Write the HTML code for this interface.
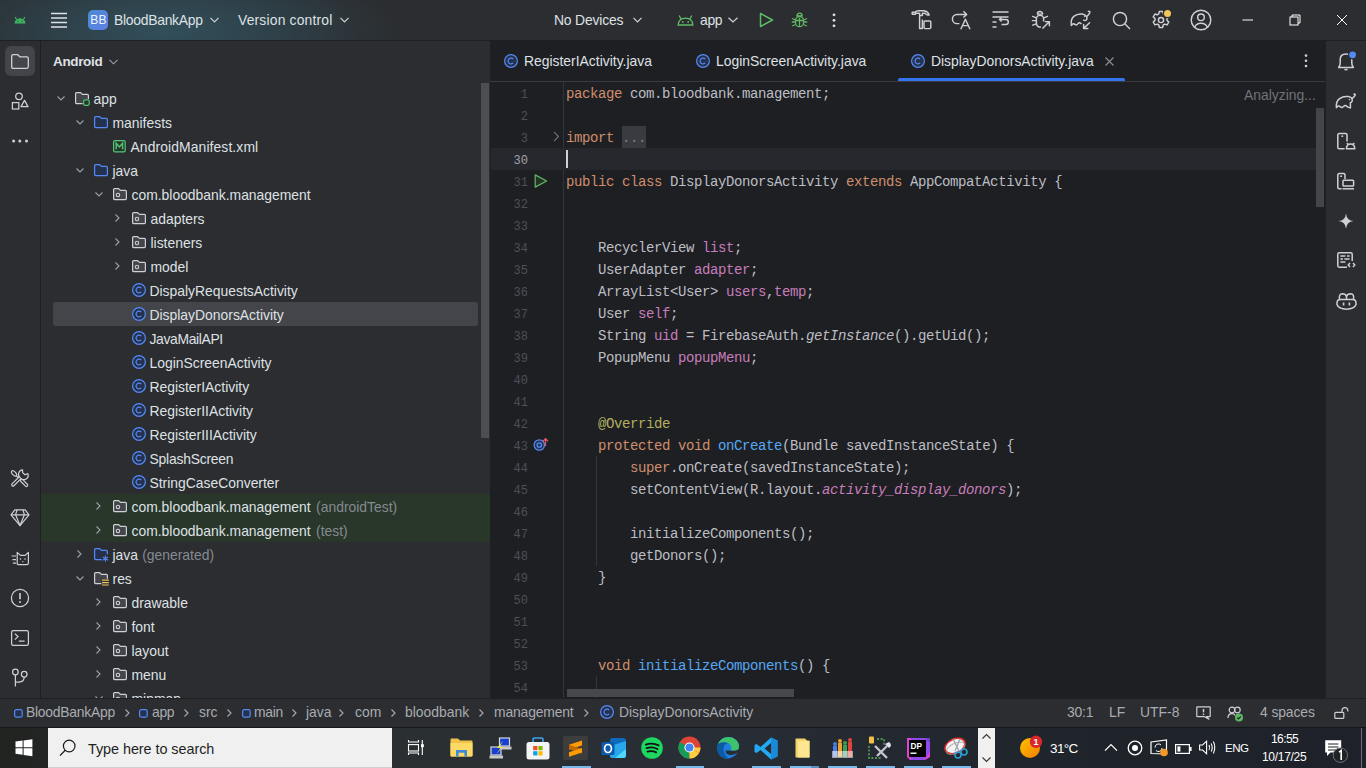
<!DOCTYPE html>
<html><head><meta charset="utf-8"><style>
*{margin:0;padding:0;box-sizing:border-box}
html,body{width:1366px;height:768px;overflow:hidden}
body{position:relative;background:#2b2d30;font-family:"Liberation Sans",sans-serif;color:#dfe1e5;font-size:13.9px}
.a{position:absolute}
.t{position:absolute;white-space:pre;line-height:16px}
svg{position:absolute;overflow:visible}
#title{left:0;top:0;width:1366px;height:40px;background:radial-gradient(ellipse 235px 80px at 165px 32px,#314f5a 0%,#2f434c 40%,#2c363b 75%,#2b2d30 100%)}
#tline{left:0;top:40px;width:1366px;height:1px;background:#1e1f22}
#lstrip{left:0;top:41px;width:40px;height:657px;background:#2b2d30}
#lsb{left:40px;top:41px;width:1px;height:657px;background:#1e1f22}
#proj{left:41px;top:41px;width:449px;height:657px;background:#2b2d30;overflow:hidden}
#editor{left:490px;top:41px;width:835px;height:657px;background:#1e1f22;overflow:hidden}
#rsb{left:1325px;top:41px;width:1px;height:657px;background:#1e1f22}
#rstrip{left:1326px;top:41px;width:40px;height:657px;background:#2b2d30}
#sline{left:0;top:698px;width:1366px;height:1px;background:#1e1f22}
#status{left:0;top:699px;width:1366px;height:28px;background:#2b2d30}
#taskbar{left:0;top:727px;width:1366px;height:41px;background:#1c1e1c}
</style></head><body>
<div class="a" id="title"></div>
<div class="a" id="tline"></div>
<div class="a" id="lstrip"></div>
<div class="a" id="lsb"></div>
<div class="a" id="proj"></div>
<div class="a" id="editor"></div>
<div class="a" id="rsb"></div>
<div class="a" id="rstrip"></div>
<div class="a" id="sline"></div>
<div class="a" id="status"></div>
<div class="a" id="taskbar"></div>
<!-- TITLE BAR -->
<svg style="left:14px;top:16px" width="12" height="8" viewBox="0 0 12 8"><path d="M0.5 7.5 Q1 2.5 6 2.2 Q11 2.5 11.5 7.5 Z" fill="#3fb35f"/><path d="M2.5 3.5 L1.2 1 M9.5 3.5 L10.8 1" stroke="#3fb35f" stroke-width="1.1"/><circle cx="4" cy="5.2" r="0.6" fill="#2b3a3a"/><circle cx="8" cy="5.2" r="0.6" fill="#2b3a3a"/></svg>
<svg style="left:51px;top:12px" width="16" height="16" viewBox="0 0 16 16"><path d="M0 1.5H16M0 6H16M0 10.5H16M0 15H16" stroke="#dfe1e5" stroke-width="1.4"/></svg>
<div class="a" style="left:88px;top:10px;width:20px;height:20px;border-radius:5px;background:linear-gradient(135deg,#4b8ad3,#5e80e6)"></div>
<div class="t" style="left:89px;top:12px;width:19px;text-align:center;font-size:12px;color:#f2f4f8;letter-spacing:0.3px">BB</div>
<div class="t" style="left:114px;top:12px;letter-spacing:-0.27px">BloodBankApp</div>
<svg style="left:210px;top:17px" width="9" height="6" viewBox="0 0 9 6"><path d="M0.5 0.8L4.5 4.8L8.5 0.8" stroke="#cfd1d6" stroke-width="1.2" fill="none"/></svg>
<div class="t" style="left:238px;top:12px;letter-spacing:0.17px">Version control</div>
<svg style="left:340px;top:17px" width="9" height="6" viewBox="0 0 9 6"><path d="M0.5 0.8L4.5 4.8L8.5 0.8" stroke="#cfd1d6" stroke-width="1.2" fill="none"/></svg>
<div class="t" style="left:554px;top:12px;letter-spacing:-0.18px">No Devices</div>
<svg style="left:633px;top:17px" width="9" height="6" viewBox="0 0 9 6"><path d="M0.5 0.8L4.5 4.8L8.5 0.8" stroke="#cfd1d6" stroke-width="1.2" fill="none"/></svg>
<svg style="left:677px;top:14px" width="17" height="12" viewBox="0 0 17 12"><path d="M1.2 11 Q1.5 4.5 8.5 4.2 Q15.5 4.5 15.8 11 Z" fill="none" stroke="#5fb865" stroke-width="1.3"/><path d="M4 5 L2.2 1.5 M13 5 L14.8 1.5" stroke="#5fb865" stroke-width="1.3"/><circle cx="5.8" cy="8" r="0.9" fill="#5fb865"/><circle cx="11.2" cy="8" r="0.9" fill="#5fb865"/></svg>
<div class="t" style="left:700px;top:12px;letter-spacing:-0.3px">app</div>
<svg style="left:728px;top:17px" width="10" height="6" viewBox="0 0 10 6"><path d="M0.5 0.8L5 5L9.5 0.8" stroke="#cfd1d6" stroke-width="1.2" fill="none"/></svg>
<svg style="left:759px;top:12px" width="15" height="16" viewBox="0 0 15 16"><path d="M1.5 1.5 L13.5 8 L1.5 14.5 Z" fill="none" stroke="#5fb865" stroke-width="1.5" stroke-linejoin="round"/></svg>
<svg style="left:791px;top:12px" width="17" height="16" viewBox="0 0 17 16"><path d="M8.5 1.2 a2.6 2.6 0 0 1 2.6 2.6 h-5.2 a2.6 2.6 0 0 1 2.6 -2.6z" fill="none" stroke="#5fb865" stroke-width="1.3"/><rect x="4.5" y="4.5" width="8" height="10.2" rx="4" fill="none" stroke="#5fb865" stroke-width="1.3"/><path d="M8.5 6v8.5M1 6.5l3.5 1.5M16 6.5l-3.5 1.5M0.8 10h3.7M16.2 10h-3.7M1.2 14l3.3-1.5M15.8 14l-3.3-1.5M4.5 8.5h8" stroke="#5fb865" stroke-width="1.3" fill="none"/></svg>
<svg style="left:832px;top:13px" width="4" height="15" viewBox="0 0 4 15"><circle cx="2" cy="1.8" r="1.4" fill="#dfe1e5"/><circle cx="2" cy="7.3" r="1.4" fill="#dfe1e5"/><circle cx="2" cy="12.8" r="1.4" fill="#dfe1e5"/></svg>
<!-- right toolbar icons -->
<svg style="left:911px;top:10px" width="21" height="20" viewBox="0 0 21 20"><g fill="none" stroke="#ced0d6" stroke-width="1.45" stroke-linejoin="round"><path d="M1.2 2.2 H4 Q5 0.8 8 0.8 H13 Q17 1.5 18.2 5 H16.2 L13.6 3.2 H11.4 V5.5 H8.6 V3.2 H4.5 V4.2 H1.2 Z"/><path d="M8.6 5.5 V18.4 H11.4 V9.6"/><rect x="13" y="11" width="6.8" height="7.6" rx="1"/></g></svg>
<svg style="left:952px;top:10px" width="19" height="20" viewBox="0 0 19 20"><g fill="none" stroke="#ced0d6" stroke-width="1.45" stroke-linejoin="round"><path d="M7.6 4.4 H5 A4.6 4.6 0 0 0 5 13.6 H7.4"/><path d="M7.4 4.4 H14.6 M11.4 1.2 L14.7 4.4 L11.4 7.6"/><path d="M8.8 19.2 L13.4 9.2 L18 19.2 M10.4 15.6 H16.4"/></g></svg>
<svg style="left:992px;top:11px" width="18" height="18" viewBox="0 0 18 18"><g fill="none" stroke="#ced0d6" stroke-width="1.45"><path d="M0.5 1H16.5M0.5 6H16.5M0.5 11H4.5M0.5 16H4.5"/><path d="M9.5 13.5 H13.8 A2.5 2.5 0 0 0 13.8 8.5 H7.5 M9.6 6.4 L7.5 8.5 L9.6 10.6"/></g></svg>
<svg style="left:1031px;top:10px" width="20" height="20" viewBox="0 0 20 20"><g fill="none" stroke="#ced0d6" stroke-width="1.45" stroke-linejoin="round"><path d="M9 1.5 a2.6 2.6 0 0 1 2.6 2.6 h-5.2 a2.6 2.6 0 0 1 2.6 -2.6z"/><path d="M12.6 11.5 V8.8 a3.6 3.6 0 0 0 -7.2 0 V13.5 a3.6 3.6 0 0 0 4.6 3.4"/><path d="M1.2 6.2 L5.2 7.8 M0.8 10.6 H5.2 M1.2 15.4 L5.2 13.8 M17 6.2 L13 7.8"/><path d="M11.5 18.5 L18.2 11.8 M13.8 11.6 H18.4 V16.2"/></g></svg>
<svg style="left:1070px;top:10px" width="22" height="20" viewBox="0 0 22 20"><g fill="none" stroke="#ced0d6" stroke-width="1.45" stroke-linejoin="round" stroke-linecap="round"><path d="M1.4 15.4 Q0.4 9.4 3.8 6.4 Q7.4 3.4 12 4 Q15.2 4.4 16.6 6.6 Q19 4.8 19.8 2.8 Q20.2 0.8 18.4 1.4"/><path d="M16.6 6.6 Q17.4 8.8 16.4 10 Q15 11 13.6 10.2"/><path d="M1.4 15.4 Q3.2 12.6 5 14.4 Q6.6 15.8 8 13.6 Q9.2 12 11 13.6"/><path d="M19.6 12.8 L13.6 18.4 M13.6 14.4 V18.4 H17.8"/></g><circle cx="14.6" cy="6.6" r="0.7" fill="#ced0d6"/></svg>
<svg style="left:1112px;top:11px" width="19" height="19" viewBox="0 0 19 19"><circle cx="8" cy="8" r="6.6" fill="none" stroke="#ced0d6" stroke-width="1.45"/><path d="M12.8 12.8 L18 18" stroke="#ced0d6" stroke-width="1.4"/></svg>
<svg style="left:1151px;top:10px" width="20" height="20" viewBox="0 0 20 20"><path d="M8.3 1.5 h3.4 l0.5 2.4 l1.6 0.9 l2.3 -0.8 l1.7 2.9 l-1.8 1.6 v1.9 l1.8 1.6 l-1.7 2.9 l-2.3 -0.8 l-1.6 0.9 l-0.5 2.4 h-3.4 l-0.5 -2.4 l-1.6 -0.9 l-2.3 0.8 l-1.7 -2.9 l1.8 -1.6 v-1.9 l-1.8 -1.6 l1.7 -2.9 l2.3 0.8 l1.6 -0.9 z" fill="none" stroke="#ced0d6" stroke-width="1.45" stroke-linejoin="round"/><circle cx="10" cy="10" r="2.6" fill="none" stroke="#ced0d6" stroke-width="1.45"/><circle cx="16.5" cy="3.4" r="4.8" fill="#2b2d30"/><circle cx="16.5" cy="3.4" r="3.5" fill="#f2c55c"/></svg>
<svg style="left:1190px;top:9px" width="22" height="22" viewBox="0 0 22 22"><circle cx="11" cy="11" r="9.8" fill="none" stroke="#ced0d6" stroke-width="1.45"/><circle cx="11" cy="8.3" r="3.3" fill="none" stroke="#ced0d6" stroke-width="1.45"/><path d="M4.6 18.4 Q6 14.2 11 14.2 Q16 14.2 17.4 18.4" fill="none" stroke="#ced0d6" stroke-width="1.45"/></svg>
<svg style="left:1242px;top:19px" width="12" height="2" viewBox="0 0 12 2"><path d="M0.5 1H11" stroke="#ffffff" stroke-width="1"/></svg>
<svg style="left:1289px;top:14px" width="12" height="12" viewBox="0 0 12 12"><rect x="1" y="3" width="8" height="8" fill="none" stroke="#fff" stroke-width="1"/><path d="M3 3V1H11V9H9" fill="none" stroke="#fff" stroke-width="1"/></svg>
<svg style="left:1336px;top:14px" width="12" height="12" viewBox="0 0 12 12"><path d="M1 1L11 11M11 1L1 11" stroke="#fff" stroke-width="1"/></svg>

<!-- LEFT STRIP -->
<div class="a" style="left:5px;top:46px;width:30px;height:30px;border-radius:6px;background:#43454a"></div>
<svg style="left:11px;top:54px" width="18" height="15" viewBox="0 0 18 15"><path d="M0.7 2.2 Q0.7 0.7 2.2 0.7 H6.8 L8.8 2.8 H15.8 Q17.3 2.8 17.3 4.3 V12.8 Q17.3 14.3 15.8 14.3 H2.2 Q0.7 14.3 0.7 12.8 Z" fill="none" stroke="#ced0d6" stroke-width="1.3" stroke-linejoin="round"/></svg>
<svg style="left:11px;top:92px" width="18" height="18" viewBox="0 0 18 18"><circle cx="8" cy="4.3" r="3.3" fill="none" stroke="#ced0d6" stroke-width="1.25"/><rect x="1.4" y="10.6" width="6.4" height="6.4" fill="none" stroke="#ced0d6" stroke-width="1.25"/><path d="M13.5 8.4 L17 14.6 H10 Z" fill="none" stroke="#ced0d6" stroke-width="1.25" stroke-linejoin="round"/></svg>
<svg style="left:11px;top:139px" width="18" height="4" viewBox="0 0 18 4"><circle cx="2.6" cy="2" r="1.5" fill="#ced0d6"/><circle cx="8.8" cy="2" r="1.5" fill="#ced0d6"/><circle cx="15.5" cy="2" r="1.5" fill="#ced0d6"/></svg>
<svg style="left:11px;top:469px" width="18" height="18" viewBox="0 0 18 18"><g stroke-linecap="round" fill="#2b2d30"><path d="M5.2 6.6 L9.6 11" stroke="#ced0d6" stroke-width="1.2"/><line x1="10.8" y1="11.6" x2="15.4" y2="16.2" stroke="#ced0d6" stroke-width="3.8"/><line x1="10.8" y1="11.6" x2="15.4" y2="16.2" stroke="#2b2d30" stroke-width="1.4"/><ellipse cx="3" cy="4.4" rx="3.3" ry="1.7" transform="rotate(45 3 4.4)" stroke="#ced0d6" stroke-width="1.2"/><line x1="2" y1="15.8" x2="9.6" y2="8.2" stroke="#ced0d6" stroke-width="3.8"/><line x1="2" y1="15.8" x2="9.6" y2="8.2" stroke="#2b2d30" stroke-width="1.4"/><path d="M9 8.6 A4.4 4.4 0 0 1 11.6 0.9 V3.6 L14 5.8 L16.9 4.6 A4.4 4.4 0 0 1 9.6 9.2" stroke="#ced0d6" stroke-width="1.2" stroke-linejoin="round"/></g></svg>
<svg style="left:10px;top:509px" width="20" height="18" viewBox="0 0 20 18"><g fill="none" stroke="#ced0d6" stroke-width="1.2" stroke-linejoin="round"><path d="M4.8 0.8 H15.2 L19 5.8 L10 16.6 L1 5.8 Z"/><path d="M1 5.8 H19 M7 0.8 L5.6 5.8 L10 16.6 L14.4 5.8 L13 0.8"/></g></svg>
<svg style="left:11px;top:551px" width="19" height="15" viewBox="0 0 19 15"><g fill="none" stroke="#ced0d6" stroke-width="1.2" stroke-linejoin="round"><path d="M6.2 13.4 V1.4 L9.5 4.4 H14.2 L17.4 1.4 V12 Q17.4 13.6 15.8 13.6 H7.6 Q6.2 13.6 6.2 12.2"/><path d="M0.6 5 H5 M1.4 8.6 H5 M1.8 12.2 H5"/></g><circle cx="9.5" cy="8" r="0.8" fill="#ced0d6"/><circle cx="14" cy="8" r="0.8" fill="#ced0d6"/><path d="M10.8 10.2 H12.8 L11.8 11.4 Z" fill="#ced0d6"/></svg>
<svg style="left:10px;top:588px" width="20" height="20" viewBox="0 0 20 20"><circle cx="10" cy="10" r="8.6" fill="none" stroke="#ced0d6" stroke-width="1.25"/><path d="M10 5 V11.2" stroke="#ced0d6" stroke-width="1.6"/><circle cx="10" cy="14" r="1" fill="#ced0d6"/></svg>
<svg style="left:11px;top:630px" width="18" height="16" viewBox="0 0 18 16"><rect x="0.6" y="0.6" width="16.8" height="14.8" rx="1.6" fill="none" stroke="#ced0d6" stroke-width="1.25"/><path d="M3.8 3.6 L7 6.6 L3.8 9.6 M7.8 11 H13.6" fill="none" stroke="#ced0d6" stroke-width="1.25"/></svg>
<svg style="left:11px;top:668px" width="18" height="20" viewBox="0 0 18 20"><g fill="none" stroke="#ced0d6" stroke-width="1.25"><circle cx="4.4" cy="4" r="2.8"/><circle cx="13.2" cy="6.2" r="2.8"/><path d="M4.4 6.8 V18.6 M13.2 9 Q13.2 14 8 14 H4.4"/></g></svg>
<!-- RIGHT STRIP -->
<svg style="left:1337px;top:51px" width="20" height="20" viewBox="0 0 20 20"><g fill="none" stroke="#ced0d6" stroke-width="1.5" stroke-linejoin="round"><path d="M1.6 16.4 H16.4 Q14.8 14.6 14.8 12 V8.6 Q14.8 3 9 3 Q3.2 3 3.2 8.6 V12 Q3.2 14.6 1.6 16.4 Z"/><path d="M7.4 18.6 H10.6"/></g><circle cx="15.6" cy="3.8" r="4.6" fill="#2b2d30"/><circle cx="15.6" cy="3.8" r="3.4" fill="#548af7"/></svg>
<svg style="left:1335px;top:93px" width="22" height="17" viewBox="0 0 22 17"><g fill="none" stroke="#ced0d6" stroke-width="1.5" stroke-linejoin="round" stroke-linecap="round"><path d="M1.5 14.5 Q0.6 8.6 4.6 5.6 Q8.6 2.8 13.2 3.6 Q15.6 4 17 5.6 Q19.6 3.8 20.2 2 Q20.4 0.6 19 1.2"/><path d="M17 5.6 Q17.8 8 16.6 9 L15.4 9.6 V14.8"/><path d="M1.5 14.5 Q3.4 11.8 5.4 13.8 Q7 15.4 8.6 13.4 Q10.2 11.6 12 13.6 Q13 14.8 15.4 14.8"/></g><circle cx="14.4" cy="6.4" r="0.75" fill="#ced0d6"/></svg>
<svg style="left:1337px;top:133px" width="19" height="17" viewBox="0 0 19 17"><g fill="none" stroke="#ced0d6" stroke-width="1.5" stroke-linejoin="round"><path d="M7.6 15.8 H2.2 Q0.8 15.8 0.8 14.4 V2 Q0.8 0.6 2.2 0.6 H8.6 Q10 0.6 10 2 V8.6"/><path d="M4.4 3.2 H6.2"/><path d="M9.4 15.8 Q9.6 11 13.6 11 Q17.6 11 17.8 15.8 Z"/><path d="M11 11.6 L10 10 M16.2 11.6 L17.2 10"/></g></svg>
<svg style="left:1337px;top:173px" width="18" height="17" viewBox="0 0 18 17"><g fill="none" stroke="#ced0d6" stroke-width="1.5" stroke-linejoin="round"><path d="M4.6 15.8 H2.2 Q0.8 15.8 0.8 14.4 V2 Q0.8 0.6 2.2 0.6 H6.6 Q8 0.6 8 2 V6"/><path d="M3.2 3.2 H5"/><rect x="6" y="7.2" width="10.6" height="5.8" rx="0.8"/><path d="M5.6 15.8 H17"/></g></svg>
<svg style="left:1338px;top:213px" width="16" height="16" viewBox="0 0 16 16"><path d="M8 0.4 Q8.6 7.4 15.6 8 Q8.6 8.6 8 15.6 Q7.4 8.6 0.4 8 Q7.4 7.4 8 0.4 Z" fill="#ced0d6"/></svg>
<svg style="left:1337px;top:252px" width="19" height="17" viewBox="0 0 19 17"><g fill="none" stroke="#ced0d6" stroke-width="1.5" stroke-linejoin="round"><path d="M10 15.2 H2.2 Q0.8 15.2 0.8 13.8 V2.2 Q0.8 0.8 2.2 0.8 H13.8 Q15.2 0.8 15.2 2.2 V9"/><path d="M3.4 4 H8.4 M10 4 H12.6 M3.4 7 H6 M7.4 7 H12.6 M3.4 10 H8.4"/><path d="M13 11 L11.2 13 L13 15 M16 11 L17.8 13 L16 15"/></g></svg>
<svg style="left:1336px;top:293px" width="21" height="17" viewBox="0 0 21 17"><g fill="none" stroke="#ced0d6" stroke-width="1.5" stroke-linejoin="round"><path d="M3.6 6.4 Q2.4 1 6.4 0.8 Q9.6 0.8 10.5 3.6 Q11.4 0.8 14.6 0.8 Q18.6 1 17.4 6.4"/><path d="M1 10 Q1 6.4 4.4 6.4 H16.6 Q20 6.4 20 10 V11.6 Q18.4 16.2 10.5 16.2 Q2.6 16.2 1 11.6 Z"/><path d="M7.6 9.6 V12.6 M13.4 9.6 V12.6" stroke-width="1.6"/><path d="M10.5 3.6 V6.4"/></g></svg>
<!-- STATUS BAR -->
<div class="a" style="left:0;top:704px;width:1366px;height:18px;color:#a9acb2">
<svg style="left:14px;top:5px" width="9" height="9" viewBox="0 0 9 9"><rect x="0.6" y="0.6" width="7.6" height="7.6" rx="1.8" fill="#25324d" stroke="#548af7" stroke-width="1.2"/></svg>
<div class="t" style="left:26px;top:0;letter-spacing:-0.25px">BloodBankApp</div>
<svg style="left:125px;top:5px" width="5" height="8" viewBox="0 0 5 8"><path d="M0.5 0.5L4 4L0.5 7.5" fill="none" stroke="#a9acb2" stroke-width="1.1"/></svg>
<svg style="left:139px;top:5px" width="9" height="9" viewBox="0 0 9 9"><rect x="0.6" y="0.6" width="7.6" height="7.6" rx="1.8" fill="#25324d" stroke="#548af7" stroke-width="1.2"/></svg>
<div class="t" style="left:152px;top:0;letter-spacing:-0.3px">app</div>
<svg style="left:184px;top:5px" width="5" height="8" viewBox="0 0 5 8"><path d="M0.5 0.5L4 4L0.5 7.5" fill="none" stroke="#a9acb2" stroke-width="1.1"/></svg>
<div class="t" style="left:199px;top:0">src</div>
<svg style="left:227px;top:5px" width="5" height="8" viewBox="0 0 5 8"><path d="M0.5 0.5L4 4L0.5 7.5" fill="none" stroke="#a9acb2" stroke-width="1.1"/></svg>
<svg style="left:242px;top:5px" width="9" height="9" viewBox="0 0 9 9"><rect x="0.6" y="0.6" width="7.6" height="7.6" rx="1.8" fill="#25324d" stroke="#548af7" stroke-width="1.2"/></svg>
<div class="t" style="left:254px;top:0;letter-spacing:-0.3px">main</div>
<svg style="left:292px;top:5px" width="5" height="8" viewBox="0 0 5 8"><path d="M0.5 0.5L4 4L0.5 7.5" fill="none" stroke="#a9acb2" stroke-width="1.1"/></svg>
<div class="t" style="left:306px;top:0">java</div>
<svg style="left:339px;top:5px" width="5" height="8" viewBox="0 0 5 8"><path d="M0.5 0.5L4 4L0.5 7.5" fill="none" stroke="#a9acb2" stroke-width="1.1"/></svg>
<div class="t" style="left:355px;top:0">com</div>
<svg style="left:391px;top:5px" width="5" height="8" viewBox="0 0 5 8"><path d="M0.5 0.5L4 4L0.5 7.5" fill="none" stroke="#a9acb2" stroke-width="1.1"/></svg>
<div class="t" style="left:405px;top:0">bloodbank</div>
<svg style="left:479px;top:5px" width="5" height="8" viewBox="0 0 5 8"><path d="M0.5 0.5L4 4L0.5 7.5" fill="none" stroke="#a9acb2" stroke-width="1.1"/></svg>
<div class="t" style="left:494px;top:0;letter-spacing:-0.15px">management</div>
<svg style="left:584px;top:5px" width="5" height="8" viewBox="0 0 5 8"><path d="M0.5 0.5L4 4L0.5 7.5" fill="none" stroke="#a9acb2" stroke-width="1.1"/></svg>
<svg style="left:600px;top:1px" width="14" height="14" viewBox="0 0 14 14"><circle cx="7" cy="7" r="6.4" fill="#25324d" stroke="#548af7" stroke-width="1.2"/><path d="M9.2 5.1 A2.9 2.9 0 1 0 9.2 8.9" fill="none" stroke="#548af7" stroke-width="1.2"/></svg>
<div class="t" style="left:619px;top:0">DisplayDonorsActivity</div>
<div class="t" style="left:1067px;top:0;letter-spacing:-0.2px">30:1</div>
<div class="t" style="left:1109px;top:0">LF</div>
<div class="t" style="left:1140px;top:0">UTF-8</div>
<svg style="left:1196px;top:2px" width="15" height="14" viewBox="0 0 15 14"><path d="M1.3 0.8 H13.7 Q14.2 0.8 14.2 1.3 V10.2 Q14.2 10.7 13.7 10.7 H10.5 L13 13.2 L8.6 10.7 H1.3 Q0.8 10.7 0.8 10.2 V1.3 Q0.8 0.8 1.3 0.8 Z" fill="none" stroke="#ced0d6" stroke-width="1.2" stroke-linejoin="round"/><path d="M7.5 3 V6.4" stroke="#ced0d6" stroke-width="1.5"/><circle cx="7.5" cy="8.4" r="0.8" fill="#ced0d6"/></svg>
<svg style="left:1227px;top:2px" width="17" height="16" viewBox="0 0 17 16"><g fill="none" stroke="#ced0d6" stroke-width="1.2"><circle cx="5" cy="4" r="2.8"/><circle cx="10.4" cy="4" r="2.8"/><path d="M1 12 Q1 7.6 5 7.6 Q7.4 7.6 8.2 9.4"/></g><circle cx="12" cy="11.6" r="4" fill="#5fb865"/><path d="M10.2 11.6 L11.5 12.9 L13.8 10.4" fill="none" stroke="#1e1f22" stroke-width="1.2"/></svg>
<div class="t" style="left:1260px;top:0;letter-spacing:-0.1px">4 spaces</div>
<svg style="left:1334px;top:3px" width="15" height="12" viewBox="0 0 15 12"><rect x="0.8" y="5.4" width="9" height="6" rx="1" fill="none" stroke="#ced0d6" stroke-width="1.2"/><path d="M8 5.4 V3.6 A2.9 2.9 0 0 1 13.8 3.6 V4.6" fill="none" stroke="#ced0d6" stroke-width="1.2"/></svg>
</div>
<!-- TASKBAR -->
<div class="a" style="left:0;top:727px;width:1366px;height:1px;background:#151617"></div>
<div class="a" style="left:0;top:728px;width:1366px;height:40px;background:linear-gradient(90deg,#212321 0%,#262a29 15%,#2a2f31 30%,#282e35 51%,#1f242b 80%,#1e2129 100%)"></div>
<svg style="left:15px;top:739px" width="18" height="18" viewBox="0 0 18 18"><path d="M0.5 2.6 L7.6 1.6 V8.2 H0.5 Z M8.6 1.4 L17.4 0.2 V8.2 H8.6 Z M0.5 9.2 H7.6 V15.8 L0.5 14.8 Z M8.6 9.2 H17.4 V17.2 L8.6 16 Z" fill="#ffffff"/></svg>
<div class="a" style="left:48px;top:728px;width:344px;height:40px;background:#f0f0f0"></div>
<div class="a" style="left:48px;top:767px;width:344px;height:1px;background:#cfcfcf"></div>
<svg style="left:59px;top:739px" width="18" height="18" viewBox="0 0 18 18"><circle cx="10.2" cy="7" r="5.8" fill="none" stroke="#1b1b1b" stroke-width="1.2"/><path d="M6.2 11.2 L1 16.6" stroke="#1b1b1b" stroke-width="1.3"/></svg>
<div class="t" style="left:88px;top:740px;font-size:14.4px;line-height:18px;color:#1f1f1f;letter-spacing:-0.05px">Type here to search</div>
<!-- task view -->
<svg style="left:407px;top:739px" width="18" height="17" viewBox="0 0 18 17"><path d="M1.5 1 V3 H11.5 V1 M1.5 16 V14 H11.5 V16" fill="none" stroke="#fff" stroke-width="1.1"/><rect x="1.5" y="5.6" width="10" height="6.4" fill="none" stroke="#fff" stroke-width="1.1"/><path d="M15.3 1 V16" stroke="#fff" stroke-width="1.1"/><rect x="14" y="5.2" width="2.8" height="3" fill="#fff"/></svg>
<!-- file explorer -->
<svg style="left:450px;top:738px" width="23" height="19" viewBox="0 0 23 19"><path d="M0.5 1.5 Q0.5 0.5 1.5 0.5 H8 L10 2.5 H21.5 Q22.5 2.5 22.5 3.5 V17.5 Q22.5 18.5 21.5 18.5 H1.5 Q0.5 18.5 0.5 17.5 Z" fill="#f2c14a"/><path d="M0.5 5 H22.5 V17.5 Q22.5 18.5 21.5 18.5 H1.5 Q0.5 18.5 0.5 17.5 Z" fill="#ffd965"/><path d="M6 12 H17 V18.5 H14.4 V14.8 H8.6 V18.5 H6 Z" fill="#3d8bd8"/></svg>
<!-- network -->
<svg style="left:489px;top:737px" width="23" height="22" viewBox="0 0 23 22"><rect x="10.5" y="1" width="10" height="8" fill="#1a3fd0" stroke="#d8d8d8" stroke-width="1.2"/><rect x="9" y="9.5" width="13.5" height="3" fill="#c8c8c8"/><rect x="2" y="10" width="10" height="8" fill="#1a3fd0" stroke="#d8d8d8" stroke-width="1.2"/><rect x="0.5" y="18.5" width="13.5" height="3" fill="#c8c8c8"/><path d="M14 4 L8 11 L11.5 11 L7 17.5 L13.5 10 L10.5 10 Z" fill="#f7e84a"/></svg>
<!-- store -->
<svg style="left:526px;top:737px" width="24" height="23" viewBox="0 0 24 23"><path d="M7 6 V2.5 Q7 1 8.5 1 H15.5 Q17 1 17 2.5 V6" fill="none" stroke="#3aa7e8" stroke-width="1.6"/><rect x="0.5" y="5" width="23" height="17.5" rx="2.5" fill="#f4f4f4"/><rect x="7.2" y="9" width="4.2" height="4.2" fill="#f25022"/><rect x="12.4" y="9" width="4.2" height="4.2" fill="#7fba00"/><rect x="7.2" y="14.2" width="4.2" height="4.2" fill="#00a4ef"/><rect x="12.4" y="14.2" width="4.2" height="4.2" fill="#ffb900"/></svg>
<!-- sublime highlighted -->
<div class="a" style="left:563px;top:736px;width:25px;height:24px;border-radius:2px;background:#3d3d3d"></div>
<svg style="left:568px;top:739px" width="15" height="19" viewBox="0 0 15 19"><path d="M1 5.8 L14 1.4 V6.4 L1 10.6 Z" fill="#ff9d00"/><path d="M1 5.8 L14 10 V14.4 L1 10.2 Z" fill="#c46a00"/><path d="M1 13.2 L14 9 V13.4 L1 17.8 Z" fill="#ff9d00"/></svg>
<div class="a" style="left:562px;top:766px;width:29px;height:2px;background:#76b9ed"></div>
<!-- outlook -->
<svg style="left:601px;top:737px" width="26" height="22" viewBox="0 0 26 22"><path d="M9 3 Q9 1 11 1 H22 Q25 1 25 4 V18 Q25 21 22 21 H11 Q9 21 9 19 Z" fill="#0f6cbd"/><path d="M9 9 L25 4 V18 Q25 21 22 21 H11 Q9 21 9 19 Z" fill="#28a8ea"/><path d="M14 21 L25 12 V18 Q25 21 22 21 Z" fill="#50d9ff"/><rect x="0.5" y="5" width="13" height="13" rx="1.5" fill="#0a5bb0"/><ellipse cx="7" cy="11.5" rx="3.4" ry="4" fill="none" stroke="#fff" stroke-width="1.7"/></svg>
<!-- spotify -->
<svg style="left:641px;top:737px" width="22" height="22" viewBox="0 0 22 22"><circle cx="11" cy="11" r="10.8" fill="#1ed760"/><path d="M4.8 7.6 Q11.5 5.4 17.6 8.4 M5.6 11.2 Q11.2 9.4 16.4 12 M6.4 14.6 Q11 13.2 15.2 15.4" fill="none" stroke="#121212" stroke-width="1.8" stroke-linecap="round"/></svg>
<!-- chrome -->
<svg style="left:678px;top:736px" width="23" height="23" viewBox="0 0 24 24"><circle cx="12" cy="12" r="11.5" fill="#db4437"/><path d="M12 12 L2.04 17.75 A11.5 11.5 0 0 1 2.04 6.25 Z" fill="#0f9d58"/><path d="M12 12 L2.04 6.25 A11.5 11.5 0 0 0 12 0.5 Z" fill="#db4437"/><path d="M12 12 L12 23.5 A11.5 11.5 0 0 1 2.04 17.75 Z" fill="#0f9d58"/><path d="M12 12 L21.96 17.75 A11.5 11.5 0 0 1 12 23.5 Z" fill="#ffcd40"/><path d="M12 12 L23.5 12 A11.5 11.5 0 0 1 21.96 17.75 Z" fill="#ffcd40"/><circle cx="12" cy="12" r="5.3" fill="#fff"/><circle cx="12" cy="12" r="4.2" fill="#4285f4"/></svg>
<div class="a" style="left:676px;top:766px;width:28px;height:2px;background:#76b9ed"></div>
<!-- edge -->
<svg style="left:716px;top:736px" width="24" height="24" viewBox="0 0 24 24"><path d="M21.5 16.5 Q19 21 13 22.5 Q6 23.5 2.5 17.5 Q0 12.5 2 8 Q4 3 9 1.5 Q15 0 19.5 3.5 Q23.5 7 23 11.5 Q22.5 14.5 18.5 14.5 H9.5 Q9.5 18.5 14 19 Q18 19.5 21.5 16.5 Z" fill="#1f7fdf"/><path d="M2 8 Q4 3 9 1.5 Q15 0 19.5 3.5 Q23.5 7 23 11.5 Q22.5 14.5 18.5 14.5 H15 Q16.5 9 12 7 Q6 5 2 8 Z" fill="#3cc36b"/><path d="M2 8 Q6 5 12 7 Q7.5 8 7.5 13 Q7.5 19 13 22.5 Q6 23.5 2.5 17.5 Q0 12.5 2 8 Z" fill="#0c59a4"/></svg>
<!-- vscode -->
<svg style="left:754px;top:737px" width="24" height="23" viewBox="0 0 24 23"><path d="M17 0.5 L23.5 3.5 V19.5 L17 22.5 L6.5 13 L2.5 16 L0.5 15 V8 L2.5 7 L6.5 10 Z M17 6 L10.5 11.5 L17 17 Z" fill="#23a9f2"/><path d="M17 0.5 L23.5 3.5 V19.5 L17 22.5 Z" fill="#1a8ad8"/></svg>
<div class="a" style="left:752px;top:766px;width:29px;height:2px;background:#76b9ed"></div>
<!-- yellow folder -->
<svg style="left:795px;top:738px" width="15" height="20" viewBox="0 0 15 20"><path d="M0.5 1 Q0.5 0.5 1 0.5 H10 L12 2.5 H14 Q14.5 2.5 14.5 3 V19 Q14.5 19.5 14 19.5 H1 Q0.5 19.5 0.5 19 Z" fill="#f5d46a"/><path d="M3 3 H14.5 V19.5 H3 Z" fill="#ffe690"/></svg>
<div class="a" style="left:790px;top:766px;width:24px;height:2px;background:#76b9ed"></div>
<div class="a" style="left:811px;top:766px;width:8px;height:2px;background:#5a8fc0"></div>
<!-- bars -->
<svg style="left:832px;top:738px" width="21" height="20" viewBox="0 0 21 20"><rect x="1" y="8" width="4" height="11" fill="#4c7ee8"/><rect x="6" y="5" width="4" height="14" fill="#f0a030"/><rect x="11" y="7" width="4" height="12" fill="#3aa050"/><rect x="16" y="4" width="4" height="15" fill="#e0443c"/><circle cx="3" cy="6" r="2" fill="#4c7ee8"/><circle cx="8" cy="3" r="2" fill="#f0a030"/><circle cx="13" cy="5" r="2" fill="#3aa050"/><circle cx="18" cy="2" r="2" fill="#e0443c"/><rect x="0" y="13" width="21" height="7" fill="#ffffff" opacity="0.55"/></svg>
<div class="a" style="left:828px;top:766px;width:29px;height:2px;background:#76b9ed"></div>
<!-- tools -->
<svg style="left:868px;top:736px" width="25" height="24" viewBox="0 0 25 24"><rect x="1" y="0.5" width="5" height="7" rx="1" fill="#f2c14a"/><path d="M1 10 V22 H13 M9 3 H16 V10" fill="none" stroke="#5cb85c" stroke-width="1.3" stroke-dasharray="2 1.6"/><path d="M9 20 L19 10 M7 10 L19 22" stroke="#c0c6cc" stroke-width="2.4"/><path d="M17 8 L21 12 L23 10 Q23 7 21 6 Z" fill="#dfe3e8"/></svg>
<div class="a" style="left:866px;top:766px;width:29px;height:2px;background:#76b9ed"></div>
<!-- dotpeek -->
<svg style="left:906px;top:737px" width="25" height="24" viewBox="0 0 25 24"><path d="M1 1 H19 L24 6 V20 L19 23 H4 L1 20 Z" fill="#e43fd8"/><path d="M5 1 H24 V15 L18 23 H5 Z" fill="#7d4cf0" opacity="0.8"/><rect x="3" y="3" width="17" height="17" fill="#000"/><text x="4.5" y="12" font-family="Liberation Sans" font-size="8.2" font-weight="bold" fill="#fff">DP</text><rect x="4.5" y="15.5" width="6" height="1.4" fill="#fff"/></svg>
<div class="a" style="left:904px;top:766px;width:29px;height:2px;background:#76b9ed"></div>
<!-- snipping -->
<svg style="left:944px;top:737px" width="25" height="23" viewBox="0 0 25 23"><ellipse cx="11" cy="9" rx="10.5" ry="7" transform="rotate(-25 11 9)" fill="#f4f4f4" stroke="#d33" stroke-width="1.6"/><ellipse cx="11.5" cy="11.5" rx="10" ry="5" transform="rotate(-25 11 11)" fill="none" stroke="#999" stroke-width="1" opacity="0.7"/><path d="M9 2 L15 14 M16 2 L11 14" stroke="#9aa3ad" stroke-width="1.2"/><circle cx="14" cy="18" r="3" fill="none" stroke="#2a9fd8" stroke-width="1.6"/><circle cx="20" cy="15" r="3" fill="none" stroke="#2a9fd8" stroke-width="1.6"/></svg>
<div class="a" style="left:942px;top:766px;width:29px;height:2px;background:#76b9ed"></div>
<!-- scroll arrows -->
<div class="a" style="left:978px;top:728px;width:17px;height:40px;background:#f0f0f0"></div>
<svg style="left:980.5px;top:732px" width="11" height="32" viewBox="0 0 11 32"><path d="M1.5 6.5 L5.5 2.5 L9.5 6.5 M1.5 25.5 L5.5 29.5 L9.5 25.5" fill="none" stroke="#3a3a3a" stroke-width="1.2"/></svg>
<!-- weather -->
<svg style="left:1019px;top:735px" width="24" height="24" viewBox="0 0 24 24"><defs><linearGradient id="sun" x1="0" y1="0" x2="1" y2="1"><stop offset="0" stop-color="#ffc400"/><stop offset="1" stop-color="#f57c00"/></linearGradient></defs><circle cx="11" cy="13" r="10" fill="url(#sun)"/><circle cx="17" cy="6.8" r="6.2" fill="#d8282c"/><text x="17" y="10.2" text-anchor="middle" font-family="Liberation Sans" font-size="9" font-weight="bold" fill="#fff">1</text></svg>
<div class="t" style="left:1050px;top:740.5px;font-size:13.5px;line-height:16px;color:#fff;letter-spacing:-0.6px">31°C</div>
<svg style="left:1104px;top:743px" width="14" height="9" viewBox="0 0 14 9"><path d="M1 7.6 L7 1.6 L13 7.6" fill="none" stroke="#fff" stroke-width="1.3"/></svg>
<svg style="left:1127px;top:740px" width="16" height="16" viewBox="0 0 16 16"><circle cx="8" cy="8" r="6.8" fill="none" stroke="#fff" stroke-width="1.3"/><circle cx="8" cy="8" r="3" fill="#fff"/></svg>
<svg style="left:1150px;top:739px" width="19" height="18" viewBox="0 0 19 18"><path d="M1 3 L16.5 1 V15 L1 14.5 Z" fill="none" stroke="#fff" stroke-width="1.2"/><path d="M5 8.5 A3.5 3.5 0 0 1 11 6 M12 9 A3.5 3.5 0 0 1 6 11.5" fill="none" stroke="#fff" stroke-width="1"/><circle cx="14" cy="13.5" r="3.8" fill="#f59a23"/></svg>
<svg style="left:1175px;top:744px" width="17" height="10" viewBox="0 0 17 10"><rect x="0.6" y="0.6" width="13.8" height="8.8" fill="none" stroke="#fff" stroke-width="1.2"/><rect x="2.4" y="2.4" width="3" height="5.2" fill="#fff"/><rect x="14.8" y="3" width="1.8" height="4" fill="#fff"/></svg>
<svg style="left:1199px;top:740px" width="17" height="15" viewBox="0 0 17 15"><path d="M0.6 5 H3.6 L7.6 1.2 V13.8 L3.6 10 H0.6 Z" fill="none" stroke="#fff" stroke-width="1.1"/><path d="M10 5 Q11.2 7.5 10 10 M12.2 3.4 Q14.2 7.5 12.2 11.6 M14.4 1.6 Q17.2 7.5 14.4 13.4" fill="none" stroke="#fff" stroke-width="1.1"/></svg>
<div class="t" style="left:1225px;top:741px;font-size:11.6px;line-height:14px;color:#fff;letter-spacing:-0.6px">ENG</div>
<div class="t" style="left:1271px;top:732px;font-size:12px;line-height:14px;color:#fff;letter-spacing:-0.6px">16:55</div>
<div class="t" style="left:1262px;top:750px;font-size:12px;line-height:14px;color:#fff;letter-spacing:-0.3px">10/17/25</div>
<svg style="left:1324px;top:739px" width="26" height="26" viewBox="0 0 26 26"><path d="M1.2 1.2 H17.2 V13.6 H6.4 L3 17 V13.6 H1.2 Z" fill="#fff"/><path d="M4 5 H14.4 M4 8 H14.4 M4 11 H12" stroke="#1f2326" stroke-width="1.1"/><circle cx="16.4" cy="16.2" r="7.2" fill="#1f2326" stroke="#6d7276" stroke-width="1"/><path d="M15 13.2 L17.2 11.6 V21" fill="none" stroke="#fff" stroke-width="1.6"/></svg>
<div class="a" style="left:1361px;top:728px;width:1px;height:40px;background:#6b6f72"></div>
<div class="a" style="left:41px;top:41px;width:449px;height:657px;overflow:hidden">
<div style="position:absolute;left:-41px;top:-41px;width:1366px;height:768px">
<div class="a" style="left:53px;top:302px;width:425px;height:24px;border-radius:3px;background:#43454a"></div>
<div class="a" style="left:41px;top:494px;width:449px;height:48px;background:#28372a"></div>
<div class="t" style="left:53px;top:53.5px;font-weight:bold;font-size:13.5px;letter-spacing:-0.35px">Android</div>
<svg style="left:109px;top:59px" width="9" height="6" viewBox="0 0 9 6"><path d="M0.5 0.8L4.5 4.8L8.5 0.8" fill="none" stroke="#9da0a8" stroke-width="1.1"/></svg>
<svg style="left:57px;top:96px" width="8" height="5" viewBox="0 0 8 5"><path d="M0.5 0.5L4 4L7.5 0.5" fill="none" stroke="#9da0a8" stroke-width="1.1"/></svg>
<svg style="left:75px;top:92px" width="16" height="14" viewBox="0 0 16 14"><path d="M0.6 1.6 Q0.6 0.6 1.6 0.6 H5.6 L7.4 2.4 H12.4 Q13.4 2.4 13.4 3.4 V10.6 Q13.4 11.6 12.4 11.6 H1.6 Q0.6 11.6 0.6 10.6 Z" fill="#43454a" stroke="#ced0d6" stroke-width="1.2"/><rect x="7.6" y="6.9" width="7.4" height="7.1" rx="1.6" fill="#2b2d30"/><rect x="8.6" y="7.9" width="5.6" height="5.4" rx="1.2" fill="#25372a" stroke="#55c57a" stroke-width="1.2"/></svg>
<div class="t" style="left:93.5px;top:90.5px;letter-spacing:0px">app</div>
<svg style="left:76px;top:120px" width="8" height="5" viewBox="0 0 8 5"><path d="M0.5 0.5L4 4L7.5 0.5" fill="none" stroke="#9da0a8" stroke-width="1.1"/></svg>
<svg style="left:94px;top:116px" width="14" height="12" viewBox="0 0 14 12"><path d="M0.6 1.6 Q0.6 0.6 1.6 0.6 H5.6 L7.4 2.4 H12.4 Q13.4 2.4 13.4 3.4 V10.6 Q13.4 11.6 12.4 11.6 H1.6 Q0.6 11.6 0.6 10.6 Z" fill="#25324d" stroke="#548af7" stroke-width="1.2"/></svg>
<div class="t" style="left:112.5px;top:114.5px;letter-spacing:0px">manifests</div>
<svg style="left:113px;top:140px" width="13" height="13" viewBox="0 0 13 13"><rect x="0.6" y="0.6" width="11.6" height="11.2" rx="1.4" fill="#25372a" stroke="#55c57a" stroke-width="1.2"/><path d="M3.2 9.2V3.2L6.4 7L9.6 3.2V9.2" fill="none" stroke="#55c57a" stroke-width="1.4" stroke-linejoin="miter"/></svg>
<div class="t" style="left:130.5px;top:138.5px;letter-spacing:0.1px">AndroidManifest.xml</div>
<svg style="left:76px;top:168px" width="8" height="5" viewBox="0 0 8 5"><path d="M0.5 0.5L4 4L7.5 0.5" fill="none" stroke="#9da0a8" stroke-width="1.1"/></svg>
<svg style="left:94px;top:164px" width="14" height="12" viewBox="0 0 14 12"><path d="M0.6 1.6 Q0.6 0.6 1.6 0.6 H5.6 L7.4 2.4 H12.4 Q13.4 2.4 13.4 3.4 V10.6 Q13.4 11.6 12.4 11.6 H1.6 Q0.6 11.6 0.6 10.6 Z" fill="#25324d" stroke="#548af7" stroke-width="1.2"/></svg>
<div class="t" style="left:112.5px;top:162.5px;letter-spacing:0px">java</div>
<svg style="left:95px;top:192px" width="8" height="5" viewBox="0 0 8 5"><path d="M0.5 0.5L4 4L7.5 0.5" fill="none" stroke="#9da0a8" stroke-width="1.1"/></svg>
<svg style="left:113px;top:188px" width="14" height="12" viewBox="0 0 14 12"><path d="M0.6 1.6 Q0.6 0.6 1.6 0.6 H5.6 L7.4 2.4 H12.4 Q13.4 2.4 13.4 3.4 V10.6 Q13.4 11.6 12.4 11.6 H1.6 Q0.6 11.6 0.6 10.6 Z" fill="#43454a" stroke="#ced0d6" stroke-width="1.2"/><circle cx="5" cy="7" r="1.7" fill="none" stroke="#ced0d6" stroke-width="1.1"/></svg>
<div class="t" style="left:131.5px;top:186.5px;letter-spacing:0px">com.bloodbank.management</div>
<svg style="left:115px;top:214px" width="5" height="8" viewBox="0 0 5 8"><path d="M0.5 0.5L4 4L0.5 7.5" fill="none" stroke="#9da0a8" stroke-width="1.1"/></svg>
<svg style="left:132px;top:212px" width="14" height="12" viewBox="0 0 14 12"><path d="M0.6 1.6 Q0.6 0.6 1.6 0.6 H5.6 L7.4 2.4 H12.4 Q13.4 2.4 13.4 3.4 V10.6 Q13.4 11.6 12.4 11.6 H1.6 Q0.6 11.6 0.6 10.6 Z" fill="#43454a" stroke="#ced0d6" stroke-width="1.2"/><circle cx="5" cy="7" r="1.7" fill="none" stroke="#ced0d6" stroke-width="1.1"/></svg>
<div class="t" style="left:150.5px;top:210.5px;letter-spacing:0px">adapters</div>
<svg style="left:115px;top:238px" width="5" height="8" viewBox="0 0 5 8"><path d="M0.5 0.5L4 4L0.5 7.5" fill="none" stroke="#9da0a8" stroke-width="1.1"/></svg>
<svg style="left:132px;top:236px" width="14" height="12" viewBox="0 0 14 12"><path d="M0.6 1.6 Q0.6 0.6 1.6 0.6 H5.6 L7.4 2.4 H12.4 Q13.4 2.4 13.4 3.4 V10.6 Q13.4 11.6 12.4 11.6 H1.6 Q0.6 11.6 0.6 10.6 Z" fill="#43454a" stroke="#ced0d6" stroke-width="1.2"/><circle cx="5" cy="7" r="1.7" fill="none" stroke="#ced0d6" stroke-width="1.1"/></svg>
<div class="t" style="left:150.5px;top:234.5px;letter-spacing:0px">listeners</div>
<svg style="left:115px;top:262px" width="5" height="8" viewBox="0 0 5 8"><path d="M0.5 0.5L4 4L0.5 7.5" fill="none" stroke="#9da0a8" stroke-width="1.1"/></svg>
<svg style="left:132px;top:260px" width="14" height="12" viewBox="0 0 14 12"><path d="M0.6 1.6 Q0.6 0.6 1.6 0.6 H5.6 L7.4 2.4 H12.4 Q13.4 2.4 13.4 3.4 V10.6 Q13.4 11.6 12.4 11.6 H1.6 Q0.6 11.6 0.6 10.6 Z" fill="#43454a" stroke="#ced0d6" stroke-width="1.2"/><circle cx="5" cy="7" r="1.7" fill="none" stroke="#ced0d6" stroke-width="1.1"/></svg>
<div class="t" style="left:150.5px;top:258.5px;letter-spacing:0px">model</div>
<svg style="left:132px;top:283px" width="14" height="14" viewBox="0 0 14 14"><circle cx="7" cy="7" r="6.4" fill="#25324d" stroke="#548af7" stroke-width="1.2"/><path d="M9.2 5.1 A2.9 2.9 0 1 0 9.2 8.9" fill="none" stroke="#548af7" stroke-width="1.2"/></svg>
<div class="t" style="left:149.5px;top:282.5px;letter-spacing:0px">DispalyRequestsActivity</div>
<svg style="left:132px;top:307px" width="14" height="14" viewBox="0 0 14 14"><circle cx="7" cy="7" r="6.4" fill="#25324d" stroke="#548af7" stroke-width="1.2"/><path d="M9.2 5.1 A2.9 2.9 0 1 0 9.2 8.9" fill="none" stroke="#548af7" stroke-width="1.2"/></svg>
<div class="t" style="left:149.5px;top:306.5px;letter-spacing:0px">DisplayDonorsActivity</div>
<svg style="left:132px;top:331px" width="14" height="14" viewBox="0 0 14 14"><circle cx="7" cy="7" r="6.4" fill="#25324d" stroke="#548af7" stroke-width="1.2"/><path d="M9.2 5.1 A2.9 2.9 0 1 0 9.2 8.9" fill="none" stroke="#548af7" stroke-width="1.2"/></svg>
<div class="t" style="left:149.5px;top:330.5px;letter-spacing:-0.35px">JavaMailAPI</div>
<svg style="left:132px;top:355px" width="14" height="14" viewBox="0 0 14 14"><circle cx="7" cy="7" r="6.4" fill="#25324d" stroke="#548af7" stroke-width="1.2"/><path d="M9.2 5.1 A2.9 2.9 0 1 0 9.2 8.9" fill="none" stroke="#548af7" stroke-width="1.2"/></svg>
<div class="t" style="left:149.5px;top:354.5px;letter-spacing:0px">LoginScreenActivity</div>
<svg style="left:132px;top:379px" width="14" height="14" viewBox="0 0 14 14"><circle cx="7" cy="7" r="6.4" fill="#25324d" stroke="#548af7" stroke-width="1.2"/><path d="M9.2 5.1 A2.9 2.9 0 1 0 9.2 8.9" fill="none" stroke="#548af7" stroke-width="1.2"/></svg>
<div class="t" style="left:149.5px;top:378.5px;letter-spacing:0px">RegisterIActivity</div>
<svg style="left:132px;top:403px" width="14" height="14" viewBox="0 0 14 14"><circle cx="7" cy="7" r="6.4" fill="#25324d" stroke="#548af7" stroke-width="1.2"/><path d="M9.2 5.1 A2.9 2.9 0 1 0 9.2 8.9" fill="none" stroke="#548af7" stroke-width="1.2"/></svg>
<div class="t" style="left:149.5px;top:402.5px;letter-spacing:0px">RegisterIIActivity</div>
<svg style="left:132px;top:427px" width="14" height="14" viewBox="0 0 14 14"><circle cx="7" cy="7" r="6.4" fill="#25324d" stroke="#548af7" stroke-width="1.2"/><path d="M9.2 5.1 A2.9 2.9 0 1 0 9.2 8.9" fill="none" stroke="#548af7" stroke-width="1.2"/></svg>
<div class="t" style="left:149.5px;top:426.5px;letter-spacing:0px">RegisterIIIActivity</div>
<svg style="left:132px;top:451px" width="14" height="14" viewBox="0 0 14 14"><circle cx="7" cy="7" r="6.4" fill="#25324d" stroke="#548af7" stroke-width="1.2"/><path d="M9.2 5.1 A2.9 2.9 0 1 0 9.2 8.9" fill="none" stroke="#548af7" stroke-width="1.2"/></svg>
<div class="t" style="left:149.5px;top:450.5px;letter-spacing:-0.22px">SplashScreen</div>
<svg style="left:132px;top:475px" width="14" height="14" viewBox="0 0 14 14"><circle cx="7" cy="7" r="6.4" fill="#25324d" stroke="#548af7" stroke-width="1.2"/><path d="M9.2 5.1 A2.9 2.9 0 1 0 9.2 8.9" fill="none" stroke="#548af7" stroke-width="1.2"/></svg>
<div class="t" style="left:149.5px;top:474.5px;letter-spacing:0px">StringCaseConverter</div>
<svg style="left:96px;top:502px" width="5" height="8" viewBox="0 0 5 8"><path d="M0.5 0.5L4 4L0.5 7.5" fill="none" stroke="#9da0a8" stroke-width="1.1"/></svg>
<svg style="left:113px;top:500px" width="14" height="12" viewBox="0 0 14 12"><path d="M0.6 1.6 Q0.6 0.6 1.6 0.6 H5.6 L7.4 2.4 H12.4 Q13.4 2.4 13.4 3.4 V10.6 Q13.4 11.6 12.4 11.6 H1.6 Q0.6 11.6 0.6 10.6 Z" fill="#43454a" stroke="#ced0d6" stroke-width="1.2"/><circle cx="5" cy="7" r="1.7" fill="none" stroke="#ced0d6" stroke-width="1.1"/></svg>
<div class="t" style="left:131.5px;top:498.5px;letter-spacing:0px">com.bloodbank.management</div>
<div class="t" style="left:316.1px;top:498.5px;color:#868a91">(androidTest)</div>
<svg style="left:96px;top:526px" width="5" height="8" viewBox="0 0 5 8"><path d="M0.5 0.5L4 4L0.5 7.5" fill="none" stroke="#9da0a8" stroke-width="1.1"/></svg>
<svg style="left:113px;top:524px" width="14" height="12" viewBox="0 0 14 12"><path d="M0.6 1.6 Q0.6 0.6 1.6 0.6 H5.6 L7.4 2.4 H12.4 Q13.4 2.4 13.4 3.4 V10.6 Q13.4 11.6 12.4 11.6 H1.6 Q0.6 11.6 0.6 10.6 Z" fill="#43454a" stroke="#ced0d6" stroke-width="1.2"/><circle cx="5" cy="7" r="1.7" fill="none" stroke="#ced0d6" stroke-width="1.1"/></svg>
<div class="t" style="left:131.5px;top:522.5px;letter-spacing:0px">com.bloodbank.management</div>
<div class="t" style="left:316.1px;top:522.5px;color:#868a91">(test)</div>
<svg style="left:77px;top:550px" width="5" height="8" viewBox="0 0 5 8"><path d="M0.5 0.5L4 4L0.5 7.5" fill="none" stroke="#9da0a8" stroke-width="1.1"/></svg>
<svg style="left:94px;top:548px" width="16" height="14" viewBox="0 0 16 14"><path d="M0.6 1.6 Q0.6 0.6 1.6 0.6 H5.6 L7.4 2.4 H12.4 Q13.4 2.4 13.4 3.4 V10.6 Q13.4 11.6 12.4 11.6 H1.6 Q0.6 11.6 0.6 10.6 Z" fill="#25324d" stroke="#548af7" stroke-width="1.2"/><rect x="7.6" y="6.4" width="8" height="8" fill="#2b2d30"/><path d="M11.4 7.4V13.8M8.6 9L14.2 12.2M14.2 9L8.6 12.2" stroke="#548af7" stroke-width="1.1"/></svg>
<div class="t" style="left:112.5px;top:546.5px;letter-spacing:0px">java</div>
<div class="t" style="left:142.2px;top:546.5px;color:#868a91">(generated)</div>
<svg style="left:76px;top:576px" width="8" height="5" viewBox="0 0 8 5"><path d="M0.5 0.5L4 4L7.5 0.5" fill="none" stroke="#9da0a8" stroke-width="1.1"/></svg>
<svg style="left:94px;top:572px" width="16" height="14" viewBox="0 0 16 14"><path d="M0.6 1.6 Q0.6 0.6 1.6 0.6 H5.6 L7.4 2.4 H12.4 Q13.4 2.4 13.4 3.4 V10.6 Q13.4 11.6 12.4 11.6 H1.6 Q0.6 11.6 0.6 10.6 Z" fill="#43454a" stroke="#ced0d6" stroke-width="1.2"/><rect x="7.4" y="6.8" width="8.6" height="7.2" fill="#2b2d30"/><path d="M8 8.2H14.8M8 10.6H14.8M8 13H14.8" stroke="#f2c55c" stroke-width="1.2"/></svg>
<div class="t" style="left:112.5px;top:570.5px;letter-spacing:0px">res</div>
<svg style="left:96px;top:598px" width="5" height="8" viewBox="0 0 5 8"><path d="M0.5 0.5L4 4L0.5 7.5" fill="none" stroke="#9da0a8" stroke-width="1.1"/></svg>
<svg style="left:113px;top:596px" width="14" height="12" viewBox="0 0 14 12"><path d="M0.6 1.6 Q0.6 0.6 1.6 0.6 H5.6 L7.4 2.4 H12.4 Q13.4 2.4 13.4 3.4 V10.6 Q13.4 11.6 12.4 11.6 H1.6 Q0.6 11.6 0.6 10.6 Z" fill="#43454a" stroke="#ced0d6" stroke-width="1.2"/><circle cx="5" cy="7" r="1.7" fill="none" stroke="#ced0d6" stroke-width="1.1"/></svg>
<div class="t" style="left:131.5px;top:594.5px;letter-spacing:0px">drawable</div>
<svg style="left:96px;top:622px" width="5" height="8" viewBox="0 0 5 8"><path d="M0.5 0.5L4 4L0.5 7.5" fill="none" stroke="#9da0a8" stroke-width="1.1"/></svg>
<svg style="left:113px;top:620px" width="14" height="12" viewBox="0 0 14 12"><path d="M0.6 1.6 Q0.6 0.6 1.6 0.6 H5.6 L7.4 2.4 H12.4 Q13.4 2.4 13.4 3.4 V10.6 Q13.4 11.6 12.4 11.6 H1.6 Q0.6 11.6 0.6 10.6 Z" fill="#43454a" stroke="#ced0d6" stroke-width="1.2"/><circle cx="5" cy="7" r="1.7" fill="none" stroke="#ced0d6" stroke-width="1.1"/></svg>
<div class="t" style="left:131.5px;top:618.5px;letter-spacing:0px">font</div>
<svg style="left:96px;top:646px" width="5" height="8" viewBox="0 0 5 8"><path d="M0.5 0.5L4 4L0.5 7.5" fill="none" stroke="#9da0a8" stroke-width="1.1"/></svg>
<svg style="left:113px;top:644px" width="14" height="12" viewBox="0 0 14 12"><path d="M0.6 1.6 Q0.6 0.6 1.6 0.6 H5.6 L7.4 2.4 H12.4 Q13.4 2.4 13.4 3.4 V10.6 Q13.4 11.6 12.4 11.6 H1.6 Q0.6 11.6 0.6 10.6 Z" fill="#43454a" stroke="#ced0d6" stroke-width="1.2"/><circle cx="5" cy="7" r="1.7" fill="none" stroke="#ced0d6" stroke-width="1.1"/></svg>
<div class="t" style="left:131.5px;top:642.5px;letter-spacing:0px">layout</div>
<svg style="left:96px;top:670px" width="5" height="8" viewBox="0 0 5 8"><path d="M0.5 0.5L4 4L0.5 7.5" fill="none" stroke="#9da0a8" stroke-width="1.1"/></svg>
<svg style="left:113px;top:668px" width="14" height="12" viewBox="0 0 14 12"><path d="M0.6 1.6 Q0.6 0.6 1.6 0.6 H5.6 L7.4 2.4 H12.4 Q13.4 2.4 13.4 3.4 V10.6 Q13.4 11.6 12.4 11.6 H1.6 Q0.6 11.6 0.6 10.6 Z" fill="#43454a" stroke="#ced0d6" stroke-width="1.2"/><circle cx="5" cy="7" r="1.7" fill="none" stroke="#ced0d6" stroke-width="1.1"/></svg>
<div class="t" style="left:131.5px;top:666.5px;letter-spacing:0px">menu</div>
<svg style="left:95px;top:696px" width="8" height="5" viewBox="0 0 8 5"><path d="M0.5 0.5L4 4L7.5 0.5" fill="none" stroke="#9da0a8" stroke-width="1.1"/></svg>
<svg style="left:113px;top:692px" width="14" height="12" viewBox="0 0 14 12"><path d="M0.6 1.6 Q0.6 0.6 1.6 0.6 H5.6 L7.4 2.4 H12.4 Q13.4 2.4 13.4 3.4 V10.6 Q13.4 11.6 12.4 11.6 H1.6 Q0.6 11.6 0.6 10.6 Z" fill="#43454a" stroke="#ced0d6" stroke-width="1.2"/><circle cx="5" cy="7" r="1.7" fill="none" stroke="#ced0d6" stroke-width="1.1"/></svg>
<div class="t" style="left:131.5px;top:690.5px;letter-spacing:0px">mipmap</div>
<div class="a" style="left:481px;top:83px;width:8px;height:355px;background:#4d4e52"></div>
</div></div>
<div class="a" style="left:490px;top:81px;width:835px;height:1px;background:#393b40"></div>
<svg style="left:504px;top:54px" width="14" height="14" viewBox="0 0 14 14"><circle cx="7" cy="7" r="6.4" fill="#25324d" stroke="#548af7" stroke-width="1.2"/><path d="M9.2 5.1 A2.9 2.9 0 1 0 9.2 8.9" fill="none" stroke="#548af7" stroke-width="1.2"/></svg>
<div class="t" style="left:524px;top:53px;letter-spacing:-0.0px">RegisterIActivity.java</div>
<svg style="left:696px;top:54px" width="14" height="14" viewBox="0 0 14 14"><circle cx="7" cy="7" r="6.4" fill="#25324d" stroke="#548af7" stroke-width="1.2"/><path d="M9.2 5.1 A2.9 2.9 0 1 0 9.2 8.9" fill="none" stroke="#548af7" stroke-width="1.2"/></svg>
<div class="t" style="left:716px;top:53px;letter-spacing:0px">LoginScreenActivity.java</div>
<svg style="left:911px;top:54px" width="14" height="14" viewBox="0 0 14 14"><circle cx="7" cy="7" r="6.4" fill="#25324d" stroke="#548af7" stroke-width="1.2"/><path d="M9.2 5.1 A2.9 2.9 0 1 0 9.2 8.9" fill="none" stroke="#548af7" stroke-width="1.2"/></svg>
<div class="t" style="left:931px;top:53px;letter-spacing:0px">DisplayDonorsActivity.java</div>
<svg style="left:1105px;top:57px" width="9" height="9" viewBox="0 0 9 9"><path d="M0.5 0.5L8.5 8.5M8.5 0.5L0.5 8.5" stroke="#8c8f95" stroke-width="1.1"/></svg>
<div class="a" style="left:898px;top:78px;width:227px;height:3px;border-radius:2px 2px 0 0;background:#3574f0"></div>
<svg style="left:1304px;top:54px" width="4" height="14" viewBox="0 0 4 14"><circle cx="2" cy="1.6" r="1.3" fill="#ced0d6"/><circle cx="2" cy="6.8" r="1.3" fill="#ced0d6"/><circle cx="2" cy="12" r="1.3" fill="#ced0d6"/></svg>
<div class="a" style="left:563px;top:82px;width:1px;height:616px;background:#313438"></div>
<div class="a" style="left:491px;top:148px;width:825px;height:22px;background:#26282e"></div>
<div class="a" style="left:566px;top:150px;width:2px;height:18px;background:#ced0d6"></div>
<div class="a" style="left:622px;top:126px;width:24px;height:22px;background:#393b40"></div>
<div class="a" style="left:596px;top:456px;width:1px;height:110px;background:#313438"></div>
<div class="a" style="left:596px;top:676px;width:1px;height:22px;background:#313438"></div>
<div class="t" style="left:498px;top:84px;width:30px;text-align:right;font-family:'Liberation Mono',monospace;font-size:12px;line-height:22px;color:#4b5059">1</div>
<div class="t" style="left:566px;top:82.7px;font-family:'Liberation Mono',monospace;font-size:14px;letter-spacing:-0.4px;line-height:22px"><span style="color:#cf8e6d">package</span><span style="color:#bcbec4"> com.bloodbank.management;</span></div>
<div class="t" style="left:498px;top:106px;width:30px;text-align:right;font-family:'Liberation Mono',monospace;font-size:12px;line-height:22px;color:#4b5059">2</div>
<div class="t" style="left:498px;top:128px;width:30px;text-align:right;font-family:'Liberation Mono',monospace;font-size:12px;line-height:22px;color:#4b5059">3</div>
<div class="t" style="left:566px;top:126.7px;font-family:'Liberation Mono',monospace;font-size:14px;letter-spacing:-0.4px;line-height:22px"><span style="color:#cf8e6d">import</span><span style="color:#bcbec4"> </span><span style="color:#7a7e85">...</span></div>
<div class="t" style="left:498px;top:150px;width:30px;text-align:right;font-family:'Liberation Mono',monospace;font-size:12px;line-height:22px;color:#a1a3ab">30</div>
<div class="t" style="left:498px;top:172px;width:30px;text-align:right;font-family:'Liberation Mono',monospace;font-size:12px;line-height:22px;color:#4b5059">31</div>
<div class="t" style="left:566px;top:170.7px;font-family:'Liberation Mono',monospace;font-size:14px;letter-spacing:-0.4px;line-height:22px"><span style="color:#cf8e6d">public</span><span style="color:#bcbec4"> </span><span style="color:#cf8e6d">class</span><span style="color:#bcbec4"> DisplayDonorsActivity </span><span style="color:#cf8e6d">extends</span><span style="color:#bcbec4"> AppCompatActivity {</span></div>
<div class="t" style="left:498px;top:194px;width:30px;text-align:right;font-family:'Liberation Mono',monospace;font-size:12px;line-height:22px;color:#4b5059">32</div>
<div class="t" style="left:498px;top:216px;width:30px;text-align:right;font-family:'Liberation Mono',monospace;font-size:12px;line-height:22px;color:#4b5059">33</div>
<div class="t" style="left:498px;top:238px;width:30px;text-align:right;font-family:'Liberation Mono',monospace;font-size:12px;line-height:22px;color:#4b5059">34</div>
<div class="t" style="left:566px;top:236.7px;font-family:'Liberation Mono',monospace;font-size:14px;letter-spacing:-0.4px;line-height:22px"><span style="color:#bcbec4">    RecyclerView </span><span style="color:#c77dbb">list</span><span style="color:#bcbec4">;</span></div>
<div class="t" style="left:498px;top:260px;width:30px;text-align:right;font-family:'Liberation Mono',monospace;font-size:12px;line-height:22px;color:#4b5059">35</div>
<div class="t" style="left:566px;top:258.7px;font-family:'Liberation Mono',monospace;font-size:14px;letter-spacing:-0.4px;line-height:22px"><span style="color:#bcbec4">    UserAdapter </span><span style="color:#c77dbb">adapter</span><span style="color:#bcbec4">;</span></div>
<div class="t" style="left:498px;top:282px;width:30px;text-align:right;font-family:'Liberation Mono',monospace;font-size:12px;line-height:22px;color:#4b5059">36</div>
<div class="t" style="left:566px;top:280.7px;font-family:'Liberation Mono',monospace;font-size:14px;letter-spacing:-0.4px;line-height:22px"><span style="color:#bcbec4">    ArrayList&lt;User&gt; </span><span style="color:#c77dbb">users</span><span style="color:#bcbec4">,</span><span style="color:#c77dbb">temp</span><span style="color:#bcbec4">;</span></div>
<div class="t" style="left:498px;top:304px;width:30px;text-align:right;font-family:'Liberation Mono',monospace;font-size:12px;line-height:22px;color:#4b5059">37</div>
<div class="t" style="left:566px;top:302.7px;font-family:'Liberation Mono',monospace;font-size:14px;letter-spacing:-0.4px;line-height:22px"><span style="color:#bcbec4">    User </span><span style="color:#c77dbb">self</span><span style="color:#bcbec4">;</span></div>
<div class="t" style="left:498px;top:326px;width:30px;text-align:right;font-family:'Liberation Mono',monospace;font-size:12px;line-height:22px;color:#4b5059">38</div>
<div class="t" style="left:566px;top:324.7px;font-family:'Liberation Mono',monospace;font-size:14px;letter-spacing:-0.4px;line-height:22px"><span style="color:#bcbec4">    String </span><span style="color:#c77dbb">uid</span><span style="color:#bcbec4"> = FirebaseAuth.</span><i style="color:#bcbec4">getInstance</i><span style="color:#bcbec4">().getUid();</span></div>
<div class="t" style="left:498px;top:348px;width:30px;text-align:right;font-family:'Liberation Mono',monospace;font-size:12px;line-height:22px;color:#4b5059">39</div>
<div class="t" style="left:566px;top:346.7px;font-family:'Liberation Mono',monospace;font-size:14px;letter-spacing:-0.4px;line-height:22px"><span style="color:#bcbec4">    PopupMenu </span><span style="color:#c77dbb">popupMenu</span><span style="color:#bcbec4">;</span></div>
<div class="t" style="left:498px;top:370px;width:30px;text-align:right;font-family:'Liberation Mono',monospace;font-size:12px;line-height:22px;color:#4b5059">40</div>
<div class="t" style="left:498px;top:392px;width:30px;text-align:right;font-family:'Liberation Mono',monospace;font-size:12px;line-height:22px;color:#4b5059">41</div>
<div class="t" style="left:498px;top:414px;width:30px;text-align:right;font-family:'Liberation Mono',monospace;font-size:12px;line-height:22px;color:#4b5059">42</div>
<div class="t" style="left:566px;top:412.7px;font-family:'Liberation Mono',monospace;font-size:14px;letter-spacing:-0.4px;line-height:22px"><span style="color:#b3ae60">    @Override</span></div>
<div class="t" style="left:498px;top:436px;width:30px;text-align:right;font-family:'Liberation Mono',monospace;font-size:12px;line-height:22px;color:#4b5059">43</div>
<div class="t" style="left:566px;top:434.7px;font-family:'Liberation Mono',monospace;font-size:14px;letter-spacing:-0.4px;line-height:22px"><span style="color:#bcbec4">    </span><span style="color:#cf8e6d">protected</span><span style="color:#bcbec4"> </span><span style="color:#cf8e6d">void</span><span style="color:#bcbec4"> </span><span style="color:#56a8f5">onCreate</span><span style="color:#bcbec4">(Bundle savedInstanceState) {</span></div>
<div class="t" style="left:498px;top:458px;width:30px;text-align:right;font-family:'Liberation Mono',monospace;font-size:12px;line-height:22px;color:#4b5059">44</div>
<div class="t" style="left:566px;top:456.7px;font-family:'Liberation Mono',monospace;font-size:14px;letter-spacing:-0.4px;line-height:22px"><span style="color:#bcbec4">        </span><span style="color:#cf8e6d">super</span><span style="color:#bcbec4">.onCreate(savedInstanceState);</span></div>
<div class="t" style="left:498px;top:480px;width:30px;text-align:right;font-family:'Liberation Mono',monospace;font-size:12px;line-height:22px;color:#4b5059">45</div>
<div class="t" style="left:566px;top:478.7px;font-family:'Liberation Mono',monospace;font-size:14px;letter-spacing:-0.4px;line-height:22px"><span style="color:#bcbec4">        setContentView(R.layout.</span><i style="color:#c77dbb">activity_display_donors</i><span style="color:#bcbec4">);</span></div>
<div class="t" style="left:498px;top:502px;width:30px;text-align:right;font-family:'Liberation Mono',monospace;font-size:12px;line-height:22px;color:#4b5059">46</div>
<div class="t" style="left:498px;top:524px;width:30px;text-align:right;font-family:'Liberation Mono',monospace;font-size:12px;line-height:22px;color:#4b5059">47</div>
<div class="t" style="left:566px;top:522.7px;font-family:'Liberation Mono',monospace;font-size:14px;letter-spacing:-0.4px;line-height:22px"><span style="color:#bcbec4">        initializeComponents();</span></div>
<div class="t" style="left:498px;top:546px;width:30px;text-align:right;font-family:'Liberation Mono',monospace;font-size:12px;line-height:22px;color:#4b5059">48</div>
<div class="t" style="left:566px;top:544.7px;font-family:'Liberation Mono',monospace;font-size:14px;letter-spacing:-0.4px;line-height:22px"><span style="color:#bcbec4">        getDonors();</span></div>
<div class="t" style="left:498px;top:568px;width:30px;text-align:right;font-family:'Liberation Mono',monospace;font-size:12px;line-height:22px;color:#4b5059">49</div>
<div class="t" style="left:566px;top:566.7px;font-family:'Liberation Mono',monospace;font-size:14px;letter-spacing:-0.4px;line-height:22px"><span style="color:#bcbec4">    }</span></div>
<div class="t" style="left:498px;top:590px;width:30px;text-align:right;font-family:'Liberation Mono',monospace;font-size:12px;line-height:22px;color:#4b5059">50</div>
<div class="t" style="left:498px;top:612px;width:30px;text-align:right;font-family:'Liberation Mono',monospace;font-size:12px;line-height:22px;color:#4b5059">51</div>
<div class="t" style="left:498px;top:634px;width:30px;text-align:right;font-family:'Liberation Mono',monospace;font-size:12px;line-height:22px;color:#4b5059">52</div>
<div class="t" style="left:498px;top:656px;width:30px;text-align:right;font-family:'Liberation Mono',monospace;font-size:12px;line-height:22px;color:#4b5059">53</div>
<div class="t" style="left:566px;top:654.7px;font-family:'Liberation Mono',monospace;font-size:14px;letter-spacing:-0.4px;line-height:22px"><span style="color:#bcbec4">    </span><span style="color:#cf8e6d">void</span><span style="color:#bcbec4"> </span><span style="color:#56a8f5">initializeComponents</span><span style="color:#bcbec4">() {</span></div>
<div class="t" style="left:498px;top:678px;width:30px;text-align:right;font-family:'Liberation Mono',monospace;font-size:12px;line-height:22px;color:#4b5059">54</div>
<svg style="left:534px;top:174px" width="14" height="14" viewBox="0 0 14 14"><path d="M1.2 0.9L12.6 7L1.2 13.1Z" fill="#253326" stroke="#5fb865" stroke-width="1.2" stroke-linejoin="round"/></svg>
<svg style="left:553px;top:131px" width="7" height="11" viewBox="0 0 7 11"><path d="M1 0.8L5.5 5.5L1 10.2" fill="none" stroke="#6f737a" stroke-width="1.1"/></svg>
<svg style="left:533px;top:437px" width="16" height="15" viewBox="0 0 16 15"><circle cx="6.3" cy="8" r="5.2" fill="#25324d" stroke="#548af7" stroke-width="1.3"/><circle cx="6.3" cy="8" r="2.2" fill="none" stroke="#548af7" stroke-width="1.3"/><path d="M12.5 9V1.8M10 4.2L12.5 1.6L15 4.2" fill="none" stroke="#e55765" stroke-width="1.3"/></svg>
<div class="t" style="left:1244px;top:87px;color:#6f737a;letter-spacing:0px">Analyzing...</div>
<div class="a" style="left:1316px;top:108px;width:8px;height:99px;background:#434549"></div>
<div class="a" style="left:567px;top:689px;width:227px;height:8px;background:#47484c"></div>
</body></html>
